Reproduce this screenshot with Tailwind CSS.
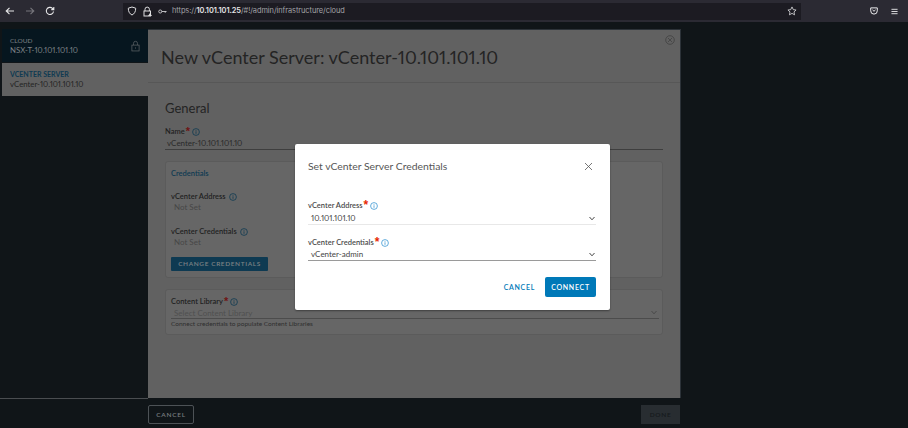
<!DOCTYPE html>
<html>
<head>
<meta charset="utf-8">
<script src="https://cdn.jsdelivr.net/npm/@tailwindcss/browser@4"></script>
</head>
<body class="m-0 bg-[#101518]">
<div class="relative flex h-[428px] w-[908px] flex-col overflow-hidden bg-[#101518] font-['Lato','Liberation_Sans',sans-serif] text-[#2c2c2c] proportional-nums">
  <!-- browser toolbar -->
  <header class="flex h-[22px] shrink-0 items-center bg-[#2b2a33] font-['Inter','Liberation_Sans',sans-serif]">
    <div class="flex w-[123px] items-center gap-[10px] pl-[5px] text-[#e6e6e8]">
      <svg class="h-[10px] w-[10px]" viewBox="0 0 10 10" fill="none" stroke="currentColor" stroke-width="1.1"><path d="M9 5H1.5M4.5 1.8 1.2 5l3.3 3.2"/></svg>
      <svg class="h-[10px] w-[10px] opacity-40" viewBox="0 0 10 10" fill="none" stroke="currentColor" stroke-width="1.1"><path d="M1 5h7.5M5.5 1.8 8.8 5 5.500 8.200"/></svg>
      <svg class="h-[10px] w-[10px]" viewBox="0 0 10 10" fill="none" stroke="currentColor" stroke-width="1.1"><path d="M8.500 5.500A3.600 3.600 0 1 1 7.400 2.300L8.800 3.400M8.800 1v2.600H6.300"/></svg>
    </div>
    <div class="flex h-[17px] w-[678px] items-center bg-[#1c1b22] pl-[4px] pr-[4px] text-[#dedee0]">
      <svg class="h-[10px] w-[10px]" viewBox="0 0 10 10" fill="none" stroke="currentColor" stroke-width="1"><path d="M5 1 8.700 2.200C8.700 5.500 7.500 7.800 5 9 2.500 7.800 1.300 5.500 1.300 2.200Z"/></svg>
      <svg class="ml-[5px] h-[11px] w-[11px]" viewBox="0 0 11 11" fill="none" stroke="currentColor"><path d="M3 5V3.300a2.200 2.200 0 0 1 4.400 0V5"/><rect x="2" y="5" width="6.500" height="5" fill="none" stroke="currentColor"/><path d="M6 10 8 7l2 3Z" fill="currentColor" stroke="none"/></svg>
      <svg class="ml-[5px] h-[9px] w-[9px]" viewBox="0 0 10 9" fill="none" stroke="currentColor" stroke-width=".9"><circle cx="2.500" cy="4.500" r="1.700"/><path d="M4.200 4.500H9.500M8 4.500v1.500"/></svg>
      <p class="ml-[5px] text-[7.400px] leading-none tracking-[-0.05px] text-[#a3a3a8]">https://<span class="font-semibold text-[#e4e4e6]">10.101.101.25</span>/#!/admin/infrastructure/cloud</p>
      <svg class="ml-auto h-[10px] w-[10px] text-[#dcdcde]" viewBox="0 0 11 11" fill="none" stroke="currentColor" stroke-width=".9"><path d="M5.500 1 6.900 4l3.100.4-2.300 2.100.6 3.200-2.800-1.600-2.800 1.600.6-3.200L1 4.400 4.100 4Z"/></svg>
    </div>
    <div class="ml-auto flex items-center gap-[13px] pr-[10px] text-[#f0f0f2]">
      <svg class="h-[8px] w-[8px]" viewBox="0 0 9 9" fill="none" stroke="currentColor" stroke-width="1.100"><path d="M.8 1h7.400v3.300a3.700 3.700 0 0 1-7.400 0Z"/><path d="M2.800 3.200 4.500 4.800 6.200 3.200"/></svg>
      <svg class="h-[7px] w-[7px]" viewBox="0 0 8 8" stroke="currentColor" stroke-width="1"><path d="M.5 1.500h7M.5 4h7M.5 6.500h7"/></svg>
    </div>
  </header>

  <!-- main -->
  <div class="mt-[7px] flex h-[369px] shrink-0 items-start">
    <aside class="h-[370px] w-[148px] shrink-0 border-b border-[#4a4d50] pl-[2px]">
      <div class="relative flex h-[33px] flex-col justify-center bg-[#06161f] pl-[8px] text-[#7d8286]">
        <p class="text-[6.500px] leading-[9px]">CLOUD</p>
        <p class="text-[7.800px] leading-[10px]">NSX-T-10.101.101.10</p>
        <svg class="absolute right-[8px] top-[11px] h-[12px] w-[9px] text-[#5f6468]" viewBox="0 0 10 12" fill="none" stroke="currentColor" stroke-width=".8"><rect x="1" y="5" width="8" height="6.500"/><path d="M2.800 5V3a2.200 2.200 0 0 1 4.400 0v2M5 7.500v1.500"/></svg>
      </div>
      <div class="mt-[1px] flex h-[33px] flex-col justify-center bg-[#616161] pl-[8px]">
        <p class="text-[7px] font-bold leading-[9px] text-[#0e3a52]">VCENTER SERVER</p>
        <p class="text-[7.800px] leading-[10px] text-[#242424]">vCenter-10.101.101.10</p>
      </div>
    </aside>

    <main class="relative h-[369px] w-[533px] shrink-0 border-r border-t border-[#2c3238] bg-[#616161]">
      <div class="h-[53px] border-b border-[#575757] pl-[13px] pt-[16px]">
        <h1 class="text-[18px] font-normal leading-[22px] text-[#242424]">New vCenter Server: vCenter-10.101.101.10</h1>
      </div>
      <svg class="absolute right-[5px] top-[5px] h-[10px] w-[10px] text-[#454545]" viewBox="0 0 10 10" fill="none" stroke="currentColor" stroke-width=".9"><circle cx="5" cy="5" r="4.300"/><path d="M3 3l4 4M7 3 3 7"/></svg>
      <div class="w-[515px] pl-[17px] pt-[17px]">
        <h2 class="text-[13px] font-normal leading-[16px] text-[#242424]">General</h2>
        <div class="mt-[11px] flex items-center text-[7.500px] font-semibold leading-[10px] text-[#1f1f1f]">Name<span class="-mt-[2px] ml-[1px] font-['Liberation_Sans'] text-[11px] leading-[8px] text-[#6f1414]">*</span><svg class="ml-[2px] h-[8px] w-[8px] text-[#0e3a52]" viewBox="0 0 8 8" fill="none" stroke="currentColor" stroke-width=".8"><circle cx="4" cy="4" r="3.400"/><path d="M4 3.300v2.500M4 2v.7"/></svg></div>
        <div class="h-[13px] w-[498px] border-b border-[#3e3e3e] pl-[2px] text-[8px] leading-[12px] text-[#2a2a2a]">vCenter-10.101.101.10</div>
        <section class="mt-[11px] h-[117px] w-[498px] rounded-[3px] border border-[#5b5b5b] bg-[#666666] pl-[5px] pt-[7px]">
          <p class="text-[7.500px] font-semibold leading-[10px] text-[#0e3a52]">Credentials</p>
          <div class="mt-[13px] flex items-center gap-[3px] text-[7.500px] font-semibold leading-[10px] text-[#1f1f1f]">vCenter Address<svg class="h-[8px] w-[8px] text-[#0e3a52]" viewBox="0 0 8 8" fill="none" stroke="currentColor" stroke-width=".8"><circle cx="4" cy="4" r="3.400"/><path d="M4 3.300v2.500M4 2v.7"/></svg></div>
          <p class="pl-[3px] text-[8px] leading-[11px] text-[#474747]">Not Set</p>
          <div class="mt-[14px] flex items-center gap-[3px] text-[7.500px] font-semibold leading-[10px] text-[#1f1f1f]">vCenter Credentials<svg class="h-[8px] w-[8px] text-[#0e3a52]" viewBox="0 0 8 8" fill="none" stroke="currentColor" stroke-width=".8"><circle cx="4" cy="4" r="3.400"/><path d="M4 3.300v2.500M4 2v.7"/></svg></div>
          <p class="pl-[3px] text-[8px] leading-[11px] text-[#474747]">Not Set</p>
          <div class="mt-[9px] flex h-[14px] w-[97px] items-center justify-center rounded-[1px] bg-[#0e3a52] text-[6.500px] font-semibold tracking-[0.6px] text-[#7d8285]">CHANGE CREDENTIALS</div>
        </section>
        <section class="mt-[11px] h-[46px] w-[498px] rounded-[3px] border border-[#5b5b5b] bg-[#666666] pl-[5px] pr-[3px] pt-[7px]">
          <div class="flex items-center text-[7.500px] font-semibold leading-[10px] text-[#1f1f1f]">Content Library<span class="-mt-[2px] ml-[1px] font-['Liberation_Sans'] text-[11px] leading-[8px] text-[#6f1414]">*</span><svg class="ml-[2px] h-[8px] w-[8px] text-[#0e3a52]" viewBox="0 0 8 8" fill="none" stroke="currentColor" stroke-width=".8"><circle cx="4" cy="4" r="3.400"/><path d="M4 3.300v2.500M4 2v.7"/></svg></div>
          <div class="flex h-[12px] items-center justify-between border-b border-[#4c4c4c] pl-[3px] pr-[2px] text-[8px] text-[#505050]">Select Content Library<svg class="h-[5px] w-[6px] text-[#444]" viewBox="0 0 6 5" fill="none" stroke="currentColor" stroke-width=".8"><path d="M.5 1 3 3.800 5.500 1"/></svg></div>
          <p class="text-[6.500px] leading-[9px] text-[#2f2f2f]">Connect credentials to populate Content Libraries</p>
        </section>
      </div>
    </main>
  </div>

  <!-- footer -->
  <footer class="flex h-[30px] items-start pl-[148px] pt-[7px]">
    <div class="flex h-[19px] w-[46px] items-center justify-center rounded-[2px] border border-[#4d5256] text-[6.500px] font-semibold tracking-[0.7px] text-[#777c7f]">CANCEL</div>
    <div class="ml-[447px] flex h-[19px] w-[39px] items-center justify-center bg-[#282d31] text-[6.500px] font-semibold tracking-[0.7px] text-[#15191c]">DONE</div>
  </footer>

  <!-- modal -->
  <div class="absolute left-[295px] top-[144px] h-[166px] w-[315px] rounded-[2px] bg-white px-[13px] shadow-[0_1px_2px_rgba(0,0,0,0.4)]">
    <div class="flex items-center justify-between pt-[15px]">
      <h3 class="text-[10.400px] font-normal leading-[14px] text-[#565656]">Set vCenter Server Credentials</h3>
      <svg class="mr-[4px] h-[9px] w-[9px] text-[#555]" viewBox="0 0 9 9" fill="none" stroke="currentColor" stroke-width=".8"><path d="M1 1l7 7M8 1 1 8"/></svg>
    </div>
    <div class="mt-[28px] flex items-center text-[7.500px] font-semibold leading-[10px] text-[#4a4a4a]">vCenter Address<span class="-mt-[2px] ml-[1px] font-['Liberation_Sans'] text-[12px] leading-[8px] text-[#e62700]">*</span><svg class="ml-[2px] h-[8px] w-[8px] text-[#3b97d3]" viewBox="0 0 8 8" fill="none" stroke="currentColor" stroke-width=".8"><circle cx="4" cy="4" r="3.400"/><path d="M4 3.300v2.500M4 2v.7"/></svg></div>
    <div class="mt-[1px] flex h-[13px] w-[288px] items-center justify-between border-b border-[#e8e8e8] pl-[3px] pr-[1px] text-[8px] text-[#454545]">10.101.101.10<svg class="h-[5px] w-[6px] text-[#333]" viewBox="0 0 6 5" fill="none" stroke="currentColor" stroke-width=".9"><path d="M.5 1 3 3.800 5.500 1"/></svg></div>
    <div class="mt-[13px] flex items-center text-[7.500px] font-semibold leading-[10px] text-[#4a4a4a]">vCenter Credentials<span class="-mt-[2px] ml-[1px] font-['Liberation_Sans'] text-[12px] leading-[8px] text-[#e62700]">*</span><svg class="ml-[2px] h-[8px] w-[8px] text-[#3b97d3]" viewBox="0 0 8 8" fill="none" stroke="currentColor" stroke-width=".8"><circle cx="4" cy="4" r="3.400"/><path d="M4 3.300v2.500M4 2v.7"/></svg></div>
    <div class="flex h-[13px] w-[288px] items-center justify-between border-b border-[#9a9a9a] pl-[3px] pr-[1px] text-[8px] text-[#454545]">vCenter-admin<svg class="h-[5px] w-[6px] text-[#333]" viewBox="0 0 6 5" fill="none" stroke="currentColor" stroke-width=".9"><path d="M.5 1 3 3.800 5.500 1"/></svg></div>
    <div class="mt-[16px] flex w-[288px] items-center justify-end">
      <span class="text-[7px] font-semibold tracking-[0.7px] text-[#0079b8]">CANCEL</span>
      <span class="ml-[10px] flex h-[20px] w-[51px] items-center justify-center rounded-[2px] bg-[#0079b8] text-[7px] font-semibold tracking-[0.7px] text-white">CONNECT</span>
    </div>
  </div>
</div>
</body>
</html>
